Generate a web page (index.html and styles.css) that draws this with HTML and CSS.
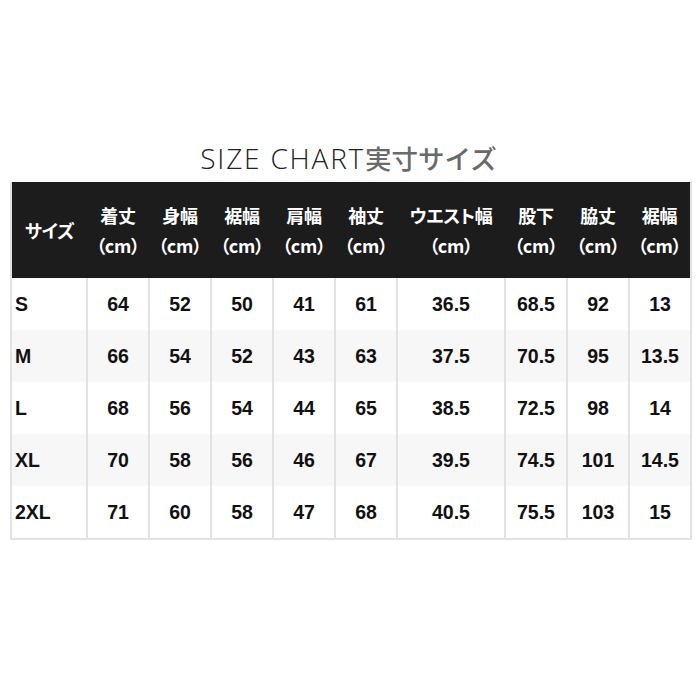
FILE: index.html
```html
<!DOCTYPE html>
<html lang="ja">
<head>
<meta charset="utf-8">
<link rel="stylesheet" href="styles.css">
</head>
<body>
<div class="page">
  <h1 class="title"><span class="en">SIZE CHART</span><span class="ja">実寸サイズ</span></h1>
  <table class="chart">
    <colgroup>
      <col class="c-size"><col class="c"><col class="c"><col class="c"><col class="c"><col class="c"><col class="c-wide"><col class="c"><col class="c"><col class="c">
    </colgroup>
    <thead>
      <tr>
        <th>サイズ</th>
        <th>着丈<br>（cm）</th>
        <th>身幅<br>（cm）</th>
        <th>裾幅<br>（cm）</th>
        <th>肩幅<br>（cm）</th>
        <th>袖丈<br>（cm）</th>
        <th>ウエスト幅<br>（cm）</th>
        <th>股下<br>（cm）</th>
        <th>脇丈<br>（cm）</th>
        <th>裾幅<br>（cm）</th>
      </tr>
    </thead>
    <tbody>
      <tr><td class="size">S</td><td>64</td><td>52</td><td>50</td><td>41</td><td>61</td><td>36.5</td><td>68.5</td><td>92</td><td>13</td></tr>
      <tr class="alt"><td class="size">M</td><td>66</td><td>54</td><td>52</td><td>43</td><td>63</td><td>37.5</td><td>70.5</td><td>95</td><td>13.5</td></tr>
      <tr><td class="size">L</td><td>68</td><td>56</td><td>54</td><td>44</td><td>65</td><td>38.5</td><td>72.5</td><td>98</td><td>14</td></tr>
      <tr class="alt"><td class="size">XL</td><td>70</td><td>58</td><td>56</td><td>46</td><td>67</td><td>39.5</td><td>74.5</td><td>101</td><td>14.5</td></tr>
      <tr><td class="size">2XL</td><td>71</td><td>60</td><td>58</td><td>47</td><td>68</td><td>40.5</td><td>75.5</td><td>103</td><td>15</td></tr>
    </tbody>
  </table>
</div>
</body>
</html>
```

FILE: styles.css
```css
html, body {
  margin: 0;
  padding: 0;
  background: #ffffff;
}

.page {
  width: 700px;
  height: 700px;
  padding: 140px 8px 0 10px;
  box-sizing: border-box;
  font-family: "Noto Sans CJK JP", "Noto Sans", sans-serif;
}

.title {
  margin: 0 0 6px 0;
  height: 36px;
  line-height: 36px;
  font-size: 27px;
  text-align: center;
  font-weight: 300;
  white-space: nowrap;
  padding-right: 5px;
}

.title .en {
  color: #222222;
  font-family: "Open Sans", "Noto Sans", sans-serif;
  font-size: 28px;
  font-weight: 300;
  letter-spacing: 1.8px;
}

.title .ja {
  color: #6a6a6a;
  font-weight: 500;
  font-size: 26.5px;
}

.chart {
  width: 682px;
  border-collapse: collapse;
  table-layout: fixed;
  border-left: 2px solid #e2e2e2;
  border-right: 2px solid #e2e2e2;
  border-bottom: 2px solid #e2e2e2;
}

.c-size { width: 76px; }
.c { width: 62px; }
.c-wide { width: 108px; }

.chart th {
  background: #1c1c1c;
  color: #ffffff;
  font-size: 18px;
  font-weight: 700;
  line-height: 30px;
  height: 96px;
  padding: 0;
  text-align: center;
  white-space: nowrap;
  font-feature-settings: "palt";
  letter-spacing: -0.3px;
}

.chart td {
  height: 52px;
  padding: 0;
  text-align: center;
  font-size: 19.5px;
  font-weight: 700;
  color: #111111;
  border-left: 2px solid #e2e2e2;
  line-height: 24px;
  font-family: "Liberation Sans", "Noto Sans CJK JP", sans-serif;
}

.chart td.size {
  text-align: left;
  padding-left: 3px;
  border-left: none;
}

.chart tr.alt td {
  background: #f7f7f7;
}
```
